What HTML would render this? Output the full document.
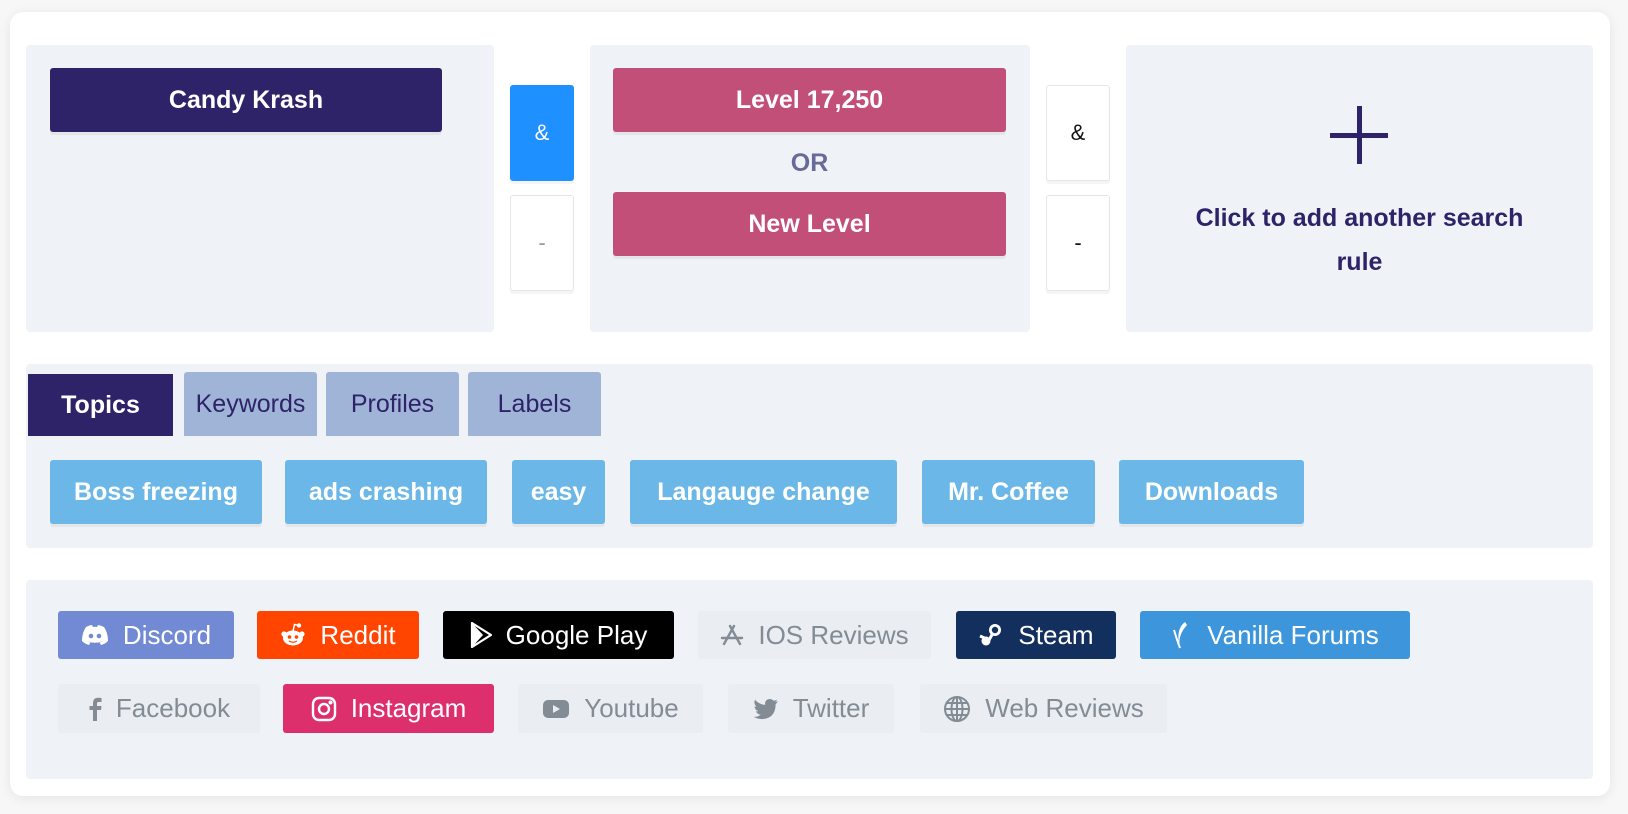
<!DOCTYPE html>
<html><head><meta charset="utf-8"><style>
*{margin:0;padding:0;box-sizing:border-box}
body{width:1628px;height:814px;background:#f7f7f8;font-family:"Liberation Sans",sans-serif;position:relative;overflow:hidden}
.a{position:absolute}
.card{left:10px;top:12px;width:1600px;height:784px;background:#fff;border-radius:13px;box-shadow:0 2px 12px rgba(0,0,0,.08)}
.panel{background:#eff3f7;border-radius:4px}
.btn{display:flex;align-items:center;justify-content:center;color:#fff;font-size:25px;font-weight:bold;border-radius:3px;box-shadow:0 3px 0 rgba(0,0,0,.05)}
.sq{display:flex;align-items:center;justify-content:center;font-size:22px;background:#fff;border:1px solid #e4e6ea;border-radius:3px;box-shadow:0 3px 0 rgba(0,0,0,.04)}
.tab{display:flex;align-items:center;justify-content:center;font-size:25px;color:#2e2369;background:#9fb4d6;border-radius:3px 3px 0 0}
.chip{display:flex;align-items:center;justify-content:center;color:#fff;font-size:25px;background:#6bb8e8;border-radius:3px;font-weight:bold;box-shadow:0 3px 0 rgba(0,0,0,.05)}
.src{display:flex;align-items:center;justify-content:center;font-size:26px;border-radius:3px;gap:14px;color:#fff}
.g{background:#eaedf1;color:#838c95}
svg{flex:none}
</style></head><body>
<div class="a card"></div>
<div class="a panel" style="left:26px;top:45px;width:468px;height:287px"></div>
<div class="a btn" style="left:50px;top:68px;width:392px;height:64px;background:#2e2369">Candy Krash</div>
<div class="a sq" style="left:510px;top:85px;width:64px;height:96px;background:#1e90ff;border-color:#1e90ff;color:#fff">&amp;</div>
<div class="a sq" style="left:510px;top:195px;width:64px;height:96px;color:#999">-</div>
<div class="a panel" style="left:590px;top:45px;width:440px;height:287px"></div>
<div class="a btn" style="left:613px;top:68px;width:393px;height:64px;background:#c24f77">Level 17,250</div>
<div class="a" style="left:613px;top:149px;width:393px;text-align:center;font-size:25px;color:#6a6a9a;font-weight:bold">OR</div>
<div class="a btn" style="left:613px;top:192px;width:393px;height:64px;background:#c24f77">New Level</div>
<div class="a sq" style="left:1046px;top:85px;width:64px;height:96px;color:#111">&amp;</div>
<div class="a sq" style="left:1046px;top:195px;width:64px;height:96px;color:#111">-</div>
<div class="a panel" style="left:1126px;top:45px;width:467px;height:287px"></div>
<div class="a" style="left:1330px;top:106px;width:58px;height:58px">
<div class="a" style="left:27px;top:0;width:5px;height:58px;background:#2e2369"></div>
<div class="a" style="left:0;top:27px;width:58px;height:5px;background:#2e2369"></div></div>
<div class="a" style="left:1126px;top:196px;width:467px;text-align:center;font-size:25px;line-height:44px;color:#2e2369;font-weight:bold">Click to add another search<br>rule</div>

<div class="a panel" style="left:26px;top:364px;width:1567px;height:184px"></div>
<div class="a tab" style="left:28px;top:374px;width:145px;height:62px;background:#2e2369;color:#fff;font-weight:bold;border-radius:0">Topics</div>
<div class="a tab" style="left:184px;top:372px;width:133px;height:64px">Keywords</div>
<div class="a tab" style="left:326px;top:372px;width:133px;height:64px">Profiles</div>
<div class="a tab" style="left:468px;top:372px;width:133px;height:64px">Labels</div>
<div class="a chip" style="left:50px;top:460px;width:212px;height:64px">Boss freezing</div>
<div class="a chip" style="left:285px;top:460px;width:202px;height:64px">ads crashing</div>
<div class="a chip" style="left:512px;top:460px;width:93px;height:64px">easy</div>
<div class="a chip" style="left:630px;top:460px;width:267px;height:64px">Langauge change</div>
<div class="a chip" style="left:922px;top:460px;width:173px;height:64px">Mr. Coffee</div>
<div class="a chip" style="left:1119px;top:460px;width:185px;height:64px">Downloads</div>

<div class="a panel" style="left:26px;top:580px;width:1567px;height:199px"></div>
<div class="a src" style="left:58px;top:611px;width:176px;height:48px;background:#7289d4"><svg width="28" height="22" viewBox="0 0 28 22"><path d="M5 3Q9 1 11 1L12 3Q14 2.6 16 3L17 1Q20 1.5 23 3Q27 9 27 17Q24 20 20 21L18.5 18.5Q20.5 17.8 22 17Q14 20.5 6 17Q7.5 17.8 9.5 18.5L8 21Q4 20 1 17Q1 9 5 3Z" fill="#fff"/><circle cx="10" cy="12" r="2.3" fill="#7289d4"/><circle cx="18" cy="12" r="2.3" fill="#7289d4"/></svg>Discord</div>
<div class="a src" style="left:257px;top:611px;width:162px;height:48px;background:#ff4500"><svg width="26" height="26" viewBox="0 0 26 26"><ellipse cx="13" cy="16" rx="10" ry="7.5" fill="#fff"/><circle cx="4" cy="12" r="2.6" fill="#fff"/><circle cx="22" cy="12" r="2.6" fill="#fff"/><circle cx="19" cy="3.5" r="2.2" fill="#fff"/><path d="M13 9L14.5 2.5L19 3.5" stroke="#fff" stroke-width="1.5" fill="none"/><circle cx="9.5" cy="15" r="1.8" fill="#ff4500"/><circle cx="16.5" cy="15" r="1.8" fill="#ff4500"/><path d="M9 19Q13 21.5 17 19" stroke="#ff4500" stroke-width="1.3" fill="none"/></svg>Reddit</div>
<div class="a src" style="left:443px;top:611px;width:231px;height:48px;background:#000"><svg width="22" height="26" viewBox="0 0 22 26"><path d="M2 1L21 13L2 25Z" fill="none" stroke="#fff" stroke-width="2.2" stroke-linejoin="round"/><path d="M2 1L13 13L2 25" fill="#fff"/></svg>Google Play</div>
<div class="a src g" style="left:698px;top:611px;width:233px;height:48px"><svg width="24" height="24" viewBox="0 0 24 24" fill="none" stroke="#838c95" stroke-width="2.4" stroke-linecap="round"><path d="M10 3L20 21M14 3L4 21M2 15H22"/></svg>IOS Reviews</div>
<div class="a src" style="left:956px;top:611px;width:160px;height:48px;background:#132f5e"><svg width="26" height="26" viewBox="0 0 26 26"><circle cx="17" cy="8" r="6" fill="#fff"/><circle cx="17" cy="8" r="3.2" fill="#132f5e"/><path d="M2 14L11 18L15 11" stroke="#fff" stroke-width="3" fill="none"/><circle cx="8" cy="19" r="4.5" fill="#fff"/></svg>Steam</div>
<div class="a src" style="left:1140px;top:611px;width:270px;height:48px;background:#3d96db"><svg width="22" height="30" viewBox="0 0 22 30"><path d="M14 2Q4 10 9 28Q6 16 16 5Z" fill="#fff"/><path d="M3 10Q6 20 9 28" stroke="#fff" stroke-width="2" fill="none"/></svg>Vanilla Forums</div>

<div class="a src g" style="left:58px;top:684px;width:202px;height:49px"><svg width="14" height="24" viewBox="0 0 14 24"><path d="M9 24V13H13L13.5 9H9V6.5Q9 5 10.5 5H13.5V1Q11.5 .8 10 .8Q5 .8 5 6V9H1.5V13H5V24Z" fill="#838c95"/></svg>Facebook</div>
<div class="a src" style="left:283px;top:684px;width:211px;height:49px;background:#dd2f6c"><svg width="26" height="26" viewBox="0 0 26 26" fill="none" stroke="#fff" stroke-width="2.4"><rect x="2" y="2" width="22" height="22" rx="6"/><circle cx="13" cy="13" r="5"/><circle cx="19.5" cy="6.5" r=".8" fill="#fff"/></svg>Instagram</div>
<div class="a src g" style="left:518px;top:684px;width:185px;height:49px"><svg width="28" height="22" viewBox="0 0 28 22"><rect x="1" y="2" width="26" height="18" rx="5" fill="#838c95"/><path d="M11 7L18 11L11 15Z" fill="#eaedf1"/></svg>Youtube</div>
<div class="a src g" style="left:728px;top:684px;width:166px;height:49px"><svg width="26" height="22" viewBox="0 0 26 22"><path d="M25 3Q23.5 4 22 4.2Q23.7 3 24 1.5Q22.5 2.5 20.7 2.8Q18 0 14.5 1.5Q11.5 3 12.2 6.8Q6 6.5 2 1.8Q0.3 5.8 3.6 8.8Q2.5 8.8 1.5 8.2Q1.8 12 5.4 13Q4.2 13.4 3 13.2Q4.2 16.4 7.6 16.6Q4.5 19.2 0.5 18.8Q5 21.5 10.5 21Q22.5 19.5 22.6 6.2Q24 5 25 3Z" fill="#838c95"/></svg>Twitter</div>
<div class="a src g" style="left:920px;top:684px;width:247px;height:49px"><svg width="28" height="28" viewBox="0 0 28 28" fill="none" stroke="#838c95" stroke-width="2"><circle cx="14" cy="14" r="12"/><ellipse cx="14" cy="14" rx="5.5" ry="12"/><path d="M2 14H26M4 8H24M4 20H24M14 2V26"/></svg>Web Reviews</div>
</body></html>
